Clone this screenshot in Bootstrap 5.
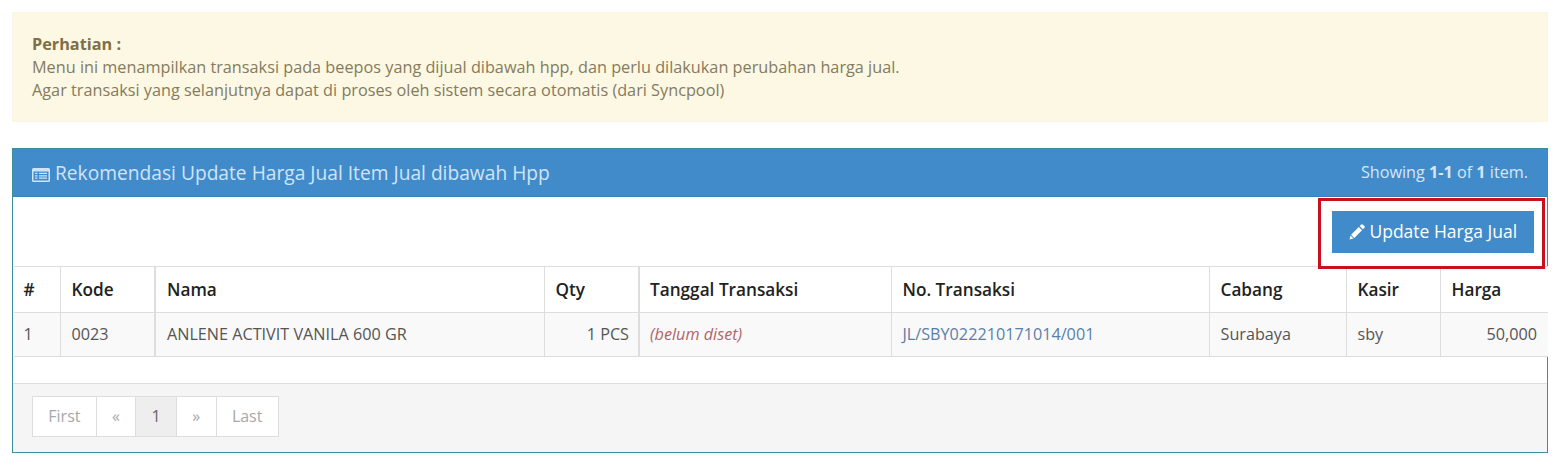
<!DOCTYPE html>
<html lang="id">
<head>
<meta charset="utf-8">
<title>Rekomendasi Update Harga Jual</title>
<link href="https://cdn.jsdelivr.net/npm/bootstrap@5.3.0/dist/css/bootstrap.min.css" rel="stylesheet">
<style>
body{font-family:"Open Sans",sans-serif;font-size:16.25px;color:#555;background:#fff;padding:12px 11px 0 12px;line-height:23px;overflow:hidden}
.note-box{background:#fcf8e3;color:#857b5e;border:1px solid #faf5e4;border-radius:0;padding:20px 19px 19px;margin:0 0 26px;height:110px}
.note-box strong{font-weight:700;color:#7f6f48}
.panel-box{position:relative;border:1px solid #3a8f9a;border-radius:0;height:305px;background:#fff}
.panel-head{background:#428bca;color:#e6f1fa;height:48px;border-bottom:1px solid #3a7fbb;padding:0 19px}
.panel-title{font-size:19.2px;font-weight:400;line-height:1;color:#cfe4f6}
.panel-count{font-size:16.2px;color:#d5e7f7}
.tool-row{height:69px;padding:14px 13px 0 0}
.btn-update{background:#428bca;color:#fff;border:0;border-radius:0;width:202px;height:42px;font-size:17.5px;padding:0;line-height:41px}
.btn-update:hover{background:#3a7fbb;color:#fff}
.hilite{position:absolute;left:1305px;top:49px;width:227px;height:71px;border:3px solid #c9101e;pointer-events:none}
.data-wrap{width:1534px;margin-left:1px;border-top:1px solid #ddd}
.data-grid{table-layout:fixed;width:1534px;margin:0;color:#555;font-size:16.2px}
.data-grid th,.data-grid td{border:0;border-right:1px solid #ddd;border-bottom:1px solid #ddd;padding:0 11px;vertical-align:middle;box-shadow:none}
.data-grid th:first-child,.data-grid td:first-child{padding-left:9.500px}
.data-grid th:nth-child(5),.data-grid td:nth-child(5){padding-left:10px}
.data-grid td:nth-child(4){padding-right:9px}
.data-grid th:last-child,.data-grid td:last-child{border-right:0}
.data-grid thead th{height:45px;font-weight:600;font-size:17.2px;color:#222;background:#fff}
.data-grid tbody td{height:44px;background:#f9f9f9}
.data-grid .thick{border-right-width:2px}
.data-grid a{color:#5b7fa8;text-decoration:none}
.not-set{color:#b0656b;font-style:italic}
.panel-foot{position:absolute;left:0;right:0;bottom:0;height:69px;background:#f5f5f5;border-top:1px solid #ddd;padding:12px 19px}
.pager{--bs-pagination-color:#a8a8a8;--bs-pagination-bg:#fff;--bs-pagination-border-color:#ddd;--bs-pagination-border-radius:0;--bs-pagination-padding-x:15.300px;--bs-pagination-padding-y:8px;--bs-pagination-font-size:16px;--bs-pagination-disabled-bg:#fff;--bs-pagination-disabled-color:#a8a8a8;--bs-pagination-disabled-border-color:#ddd;--bs-pagination-active-bg:#eee;--bs-pagination-active-color:#666;--bs-pagination-active-border-color:#ddd;margin:0}
.pager .page-link{height:41px;line-height:23px}
.glyph{vertical-align:-2px;fill:currentColor}
</style>
</head>
<body>
<div class="alert note-box" role="alert">
  <strong>Perhatian :</strong><br>
  Menu ini menampilkan transaksi pada beepos yang dijual dibawah hpp, dan perlu dilakukan perubahan harga jual.<br>
  Agar transaksi yang selanjutnya dapat di proses oleh sistem secara otomatis (dari Syncpool)
</div>
<div class="panel-box">
  <div class="panel-head d-flex justify-content-between align-items-center">
    <div class="panel-title"><svg class="glyph" width="18" height="14" viewBox="0 0 18 14"><path fill-rule="evenodd" d="M1.500 0h15A1.500 1.500 0 0 1 18 1.500v11a1.500 1.500 0 0 1-1.500 1.500h-15A1.500 1.500 0 0 1 0 12.500v-11A1.500 1.500 0 0 1 1.500 0zM1.500 3.500v9h15v-9zM3 4.800h2.500v1.200H3zM7 4.800h8v1.200H7zM3 7.200h2.500v1.200H3zM7 7.200h8v1.200H7zM3 9.600h2.500v1.200H3zM7 9.600h8v1.200H7z"/></svg> Rekomendasi Update Harga Jual Item Jual dibawah Hpp</div>
    <div class="panel-count">Showing <b>1-1</b> of <b>1</b> item.</div>
  </div>
  <div class="tool-row d-flex justify-content-end">
    <a href="#" class="btn btn-update"><svg class="glyph" width="16" height="16" viewBox="0 0 16 16"><path d="M12.300.500a1 1 0 0 1 1.400 0l1.800 1.800a1 1 0 0 1 0 1.400L13.900 5.300 10.700 2.100zM9.800 3l3.200 3.200-7.700 7.700-3.200-3.200zM1.400 11.500l3.100 3.100L.500 15.500z"/></svg> Update Harga Jual</a>
  </div>
  <div class="hilite"></div>
  <div class="data-wrap">
    <table class="table data-grid">
      <colgroup>
        <col style="width:46px"><col style="width:95px"><col style="width:389px"><col style="width:95px"><col style="width:252px"><col style="width:318px"><col style="width:137px"><col style="width:94px"><col style="width:108px">
      </colgroup>
      <thead>
        <tr><th>#</th><th class="thick">Kode</th><th>Nama</th><th class="thick">Qty</th><th>Tanggal Transaksi</th><th>No. Transaksi</th><th>Cabang</th><th>Kasir</th><th>Harga</th></tr>
      </thead>
      <tbody>
        <tr><td>1</td><td class="thick">0023</td><td>ANLENE ACTIVIT VANILA 600 GR</td><td class="thick text-end">1 PCS</td><td><span class="not-set">(belum diset)</span></td><td><a href="#">JL/SBY022210171014/001</a></td><td>Surabaya</td><td>sby</td><td class="text-end">50,000</td></tr>
      </tbody>
    </table>
  </div>
  <div class="panel-foot">
    <ul class="pagination pager">
      <li class="page-item disabled"><a class="page-link" href="#">First</a></li>
      <li class="page-item disabled"><a class="page-link" href="#">«</a></li>
      <li class="page-item active"><a class="page-link" href="#">1</a></li>
      <li class="page-item disabled"><a class="page-link" href="#">»</a></li>
      <li class="page-item disabled"><a class="page-link" href="#">Last</a></li>
    </ul>
  </div>
</div>
<script src="https://cdn.jsdelivr.net/npm/bootstrap@5.3.0/dist/js/bootstrap.bundle.min.js"></script>
</body>
</html>
